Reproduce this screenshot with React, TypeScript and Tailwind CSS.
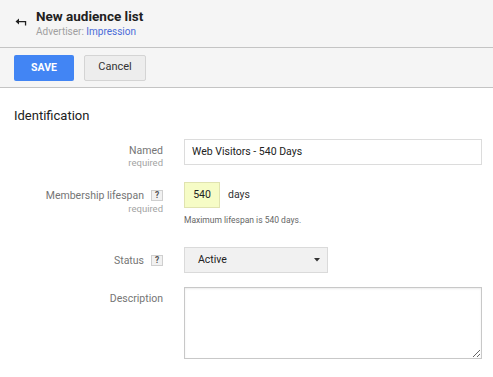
import React from 'react';

function BackArrow() {
  return (
    <svg width="12" height="9" viewBox="0 0 12 9" className="text-[#212121]">
      <path d="M0.5 3.6 L4 0.6 L4 2.9 L11.2 2.9 L11.2 7.6 L9.9 7.6 L9.9 4.3 L4 4.3 L4 6.6 Z" fill="currentColor" />
    </svg>
  );
}

function Help() {
  return (
    <span className="ml-[7px] inline-flex h-[11px] w-[12px] items-center justify-center border border-[#cfcfcf] bg-[#f1f1f1] text-[8.5px] leading-none font-bold text-[#555]">
      ?
    </span>
  );
}

export default function App() {
  return (
    <div className="h-[377px] w-[493px] overflow-hidden bg-white font-['Roboto','Liberation_Sans',sans-serif]">
      {/* Header */}
      <div className="flex h-[47px] items-start bg-[#f5f5f5] pl-[15px] pt-[7px]">
        <div className="mt-[11px]">
          <BackArrow />
        </div>
        <div className="ml-[9px]">
          <div className="text-[13.5px] leading-[18px] font-bold text-[#212121]">New audience list</div>
          <div className="text-[10px] leading-[13px] text-[#a0a0a0]">
            Advertiser: <span className="text-[#4a6cd8]">Impression</span>
          </div>
        </div>
      </div>

      {/* Toolbar */}
      <div className="flex h-[41px] items-center gap-[10px] border-y border-[#c4c4c4] bg-[#f5f5f5] px-[14px]">
        <button className="h-[26px] w-[60px] rounded-[2px] bg-[#4285f4] text-[10.5px] font-bold text-white">SAVE</button>
        <button className="h-[26px] w-[62px] rounded-[2px] border border-[#d4d4d4] bg-[#ededed] text-[11px] text-[#333]">
          Cancel
        </button>
      </div>

      {/* Body */}
      <div className="pl-[14px] pt-[19px]">
        <div className="text-[13px] leading-[18px] text-[#212121]">Identification</div>

        <div className="mt-[14px] flex items-start">
          <div className="w-[149px] shrink-0 pt-[5px] text-right">
            <div className="text-[10.5px] leading-[13px] text-[#757575]">Named</div>
            <div className="text-[9.5px] leading-[12px] text-[#a3a3a3]">required</div>
          </div>
          <div className="ml-[21px]">
            <div className="flex h-[26px] w-[298px] items-center border border-[#dcdcdc] px-[7px] text-[10.5px] text-[#222]">
              Web Visitors - 540 Days
            </div>
          </div>
        </div>

        <div className="mt-[13px] flex items-start">
          <div className="w-[149px] shrink-0 pt-[7px] text-right">
            <div className="flex items-center justify-end text-[10.5px] leading-[13px] text-[#757575]">
              Membership lifespan <Help />
            </div>
            <div className="mt-[1px] text-[9.5px] leading-[12px] text-[#a3a3a3]">required</div>
          </div>
          <div className="ml-[21px]">
            <div className="flex items-center">
              <div className="flex h-[26px] w-[36px] items-center justify-center border border-[#e0e3b0] bg-[#f6fcc6] text-[10.5px] text-[#222]">
                540
              </div>
              <span className="ml-[8px] text-[10.5px] text-[#333]">days</span>
            </div>
            <div className="mt-[6px] text-[8.5px] leading-[12px] text-[#666]">Maximum lifespan is 540 days.</div>
          </div>
        </div>

        <div className="mt-[21px] flex items-center">
          <div className="flex w-[149px] shrink-0 items-center justify-end text-[10.5px] leading-[13px] text-[#757575]">
            Status <Help />
          </div>
          <div className="ml-[21px]">
            <div className="flex h-[26px] w-[144px] items-center justify-between border border-[#dadada] bg-[#f1f1f1] pl-[13px] pr-[7px] text-[10.5px] text-[#222]">
              <span>Active</span>
              <svg width="6" height="4" viewBox="0 0 6 4">
                <path d="M0 0 L6 0 L3 3.5 Z" fill="#333" />
              </svg>
            </div>
          </div>
        </div>

        <div className="mt-[14px] flex items-start">
          <div className="w-[149px] shrink-0 pt-[5px] text-right text-[10.5px] leading-[13px] text-[#757575]">Description</div>
          <div className="ml-[21px]">
            <textarea
              readOnly
              className="block h-[72px] w-[298px] resize-y border border-[#c8c8c8] bg-white shadow-[inset_0_1px_2px_rgba(0,0,0,0.08)] outline-none"
            />
          </div>
        </div>
      </div>
    </div>
  );
}
